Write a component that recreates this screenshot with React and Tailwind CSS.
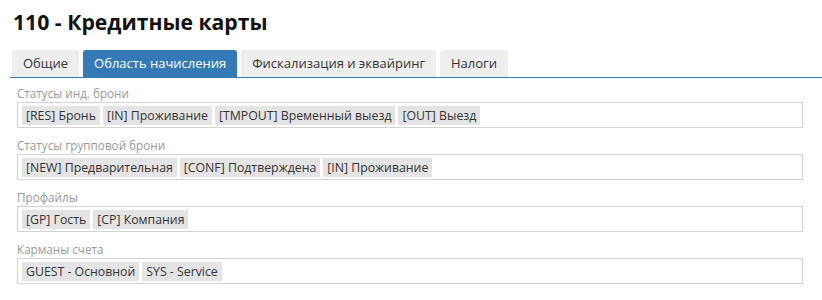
import React from "react";

const groups = [
  { label: "Статусы инд. брони", tags: ["[RES] Бронь", "[IN] Проживание", "[TMPOUT] Временный выезд", "[OUT] Выезд"] },
  { label: "Статусы групповой брони", tags: ["[NEW] Предварительная", "[CONF] Подтверждена", "[IN] Проживание"] },
  { label: "Профайлы", tags: ["[GP] Гость", "[CP] Компания"] },
  { label: "Карманы счета", tags: ["GUEST - Основной", "SYS - Service"] },
];

const tabs = ["Общие", "Область начисления", "Фискализация и эквайринг", "Налоги"];

export default function App() {
  return (
    <div className="w-[822px] h-[300px] bg-white text-[#333]" style={{ fontFamily: '"Open Sans", "Noto Sans", sans-serif' }}>
      <div className="pl-[13px] pt-[6px] text-[21.2px] leading-[32px] font-bold text-[#111]">110 - Кредитные карты</div>
      <div className="ml-[10px] mt-[12px] flex gap-[4px] pl-[2px] border-b border-[#337ab7] h-[28px]">
        {tabs.map((t, i) => (
          <div
            key={t}
            className={
              "h-[27px] px-[11px] flex items-center text-[13px] rounded-t-[3px] " +
              (i === 1 ? "bg-[#337ab7] text-white" : "bg-[#eeeeee] text-[#333]")
            }
          >
            {t}
          </div>
        ))}
      </div>
      <div className="ml-[17px] mr-[19px] mt-[7px]">
        {groups.map((g) => (
          <div key={g.label} className="mb-[9px]">
            <div className="h-[17px] leading-[17px] text-[11.7px] text-[#999]">{g.label}</div>
            <div className="h-[26px] border border-[#d4d4d4] flex items-center pl-[4px] gap-[3px]">
              {g.tags.map((t) => (
                <span key={t} className="bg-[#e4e4e4] px-[4px] h-[19px] leading-[19px] text-[12.3px] text-[#333]">
                  {t}
                </span>
              ))}
            </div>
          </div>
        ))}
      </div>
    </div>
  );
}
